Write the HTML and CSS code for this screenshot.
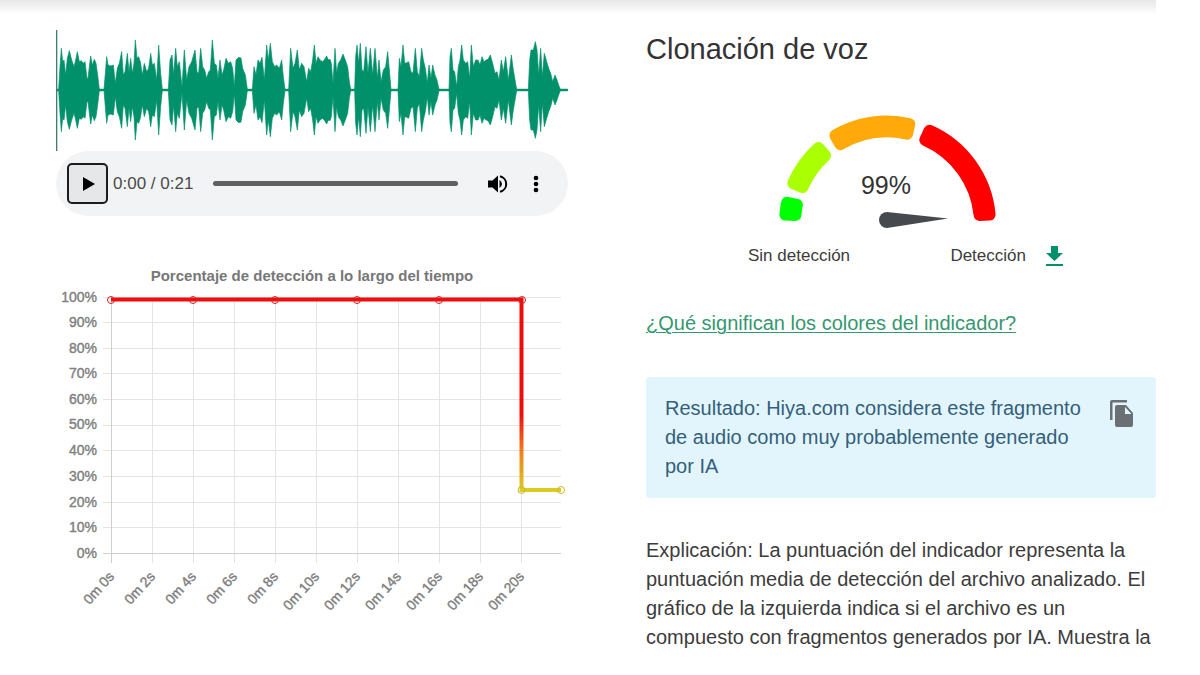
FILE: index.html
```html
<!doctype html>
<html lang="es">
<head>
	<meta charset="utf-8">
	<meta name="viewport" content="width=device-width, initial-scale=1.0">
	<title>Clonación de voz</title>
	<link rel="stylesheet" href="styles.css">
</head>
<body>
	<div class="shade"></div>
	<main class="content">
		<section class="audio">
			<svg class="wave" viewBox="48 90 1536 363" role="img" aria-label="Forma de onda">
				<defs>
					<g id="half">
						<polygon points="50,272 50,268 56,268 60,200 64,145 68,185 72,180 77,225 82,175 88,152 95,180 102,200 106,185 112,155 118,185 124,182 130,190 135,185 141,235 144,235 148,200 152,168 157,195 163,178 168,190 173,225 178,268 192,268 196,220 200,170 204,195 212,198 220,195 226,250 232,205 238,190 245,155 250,225 255,215 262,160 267,215 272,175 277,220 282,190 286,120 291,175 296,170 301,185 307,225 313,190 320,215 326,205 332,160 337,195 343,190 350,240 356,135 362,220 367,268 385,268 390,180 396,165 401,225 407,145 412,200 418,185 426,260 433,150 440,240 447,200 455,185 465,150 471,215 476,220 482,145 488,200 494,210 500,235 506,215 511,210 517,120 523,190 529,195 534,235 540,180 546,225 551,210 558,175 565,190 572,185 578,205 583,260 588,180 596,172 603,174 608,205 616,225 622,268 637,268 642,200 648,225 654,180 660,190 666,172 673,240 680,135 685,180 691,130 697,185 704,200 710,195 718,205 725,180 730,230 735,268 746,268 752,145 759,205 765,190 772,150 778,210 785,190 792,200 800,245 806,205 812,215 818,180 823,135 828,190 834,170 840,180 848,185 854,178 860,168 865,180 870,178 874,190 879,250 885,145 890,220 895,190 902,180 909,162 916,180 923,200 928,245 932,268 932,272"/>
						<polygon points="932,272 932,268 944,268 947,170 951,135 956,190 961,130 966,210 971,215 978,140 984,220 991,145 998,225 1005,145 1012,235 1017,180 1023,245 1030,210 1037,200 1043,155 1048,210 1053,268 1074,268 1078,175 1083,200 1089,135 1094,190 1100,188 1106,185 1113,215 1119,220 1126,145 1132,215 1138,230 1145,145 1150,180 1156,205 1162,250 1167,195 1173,235 1178,195 1185,225 1191,240 1197,268 1227,268 1230,170 1234,145 1239,210 1244,215 1250,260 1255,200 1260,180 1265,135 1270,180 1277,190 1283,185 1289,235 1294,135 1300,200 1307,180 1314,180 1320,195 1326,170 1332,185 1338,180 1344,178 1351,165 1358,190 1365,220 1371,215 1377,240 1384,180 1390,215 1397,170 1405,240 1414,165 1420,210 1426,245 1430,268 1465,268 1469,180 1473,150 1480,150 1486,125 1491,150 1496,225 1502,145 1507,230 1513,160 1520,185 1526,205 1532,220 1538,245 1545,225 1551,240 1556,255 1561,268 1583,268 1583,272"/>
					</g>
				</defs>
				<g class="wave-fill">
					<use href="#half"/>
					<use href="#half" transform="matrix(1 0 0 -1 0 540)"/>
				</g>
				<rect class="cursor" x="48" y="90" width="4" height="363"/>
			</svg>

			<div class="player">
				<button class="play" type="button" aria-label="Reproducir">
					<svg width="12" height="14" viewBox="0 0 12 14"><path d="M0 0l12 7-12 7z"/></svg>
				</button>
				<span class="time">0:00 / 0:21</span>
				<input class="seek" type="range" min="0" max="21" value="0" aria-label="Posición">
				<button class="icon-btn" type="button" aria-label="Volumen">
					<svg width="20" height="18" viewBox="0 0 20 18">
						<path d="M0 5.500h4.500L10 0.500v17L4.500 12.500H0z"/>
						<path d="M11.500 5a4.500 4.500 0 0 1 0 8z"/>
						<path d="M12 1.200a8 8 0 0 1 0 15.600" fill="none" stroke="#000" stroke-width="2"/>
					</svg>
				</button>
				<button class="icon-btn" type="button" aria-label="Más opciones">
					<svg width="6" height="18" viewBox="0 0 6 18"><circle cx="3" cy="3" r="2.300"/><circle cx="3" cy="9" r="2.300"/><circle cx="3" cy="15" r="2.300"/></svg>
				</button>
			</div>

			<svg class="chart" viewBox="56 262 512 360" role="img" aria-label="Porcentaje de detección a lo largo del tiempo">
				<defs>
					<linearGradient id="drop" gradientUnits="userSpaceOnUse" x1="0" y1="300" x2="0" y2="490">
						<stop offset="0.600" stop-color="#f00c0c"/>
						<stop offset="0.800" stop-color="#f08020"/>
						<stop offset="1" stop-color="#dccb20"/>
					</linearGradient>
				</defs>
				<text class="chart-title" x="312" y="281">Porcentaje de detección a lo largo del tiempo</text>
				<path class="grid" d="M103 297.500H561M103 322.500H561M103 348.500H561M103 373.500H561M103 399.500H561M103 425.500H561M103 450.500H561M103 476.500H561M103 502.500H561M103 527.500H561"/>
				<path class="grid" d="M152.500 297V563M193.500 297V563M234.500 297V563M275.500 297V563M316.500 297V563M357.500 297V563M398.500 297V563M439.500 297V563M480.500 297V563M521.500 297V563"/>
				<path class="axis" d="M103 553.500H561M111.500 297V563"/>
				<g class="y-labels">
					<text x="97" y="302">100%</text>
					<text x="97" y="327">90%</text>
					<text x="97" y="353">80%</text>
					<text x="97" y="378">70%</text>
					<text x="97" y="404">60%</text>
					<text x="97" y="429">50%</text>
					<text x="97" y="455">40%</text>
					<text x="97" y="481">30%</text>
					<text x="97" y="507">20%</text>
					<text x="97" y="532">10%</text>
					<text x="97" y="558">0%</text>
				</g>
				<g class="x-labels">
					<text transform="translate(115 577) rotate(-48)">0m 0s</text>
					<text transform="translate(156 577) rotate(-48)">0m 2s</text>
					<text transform="translate(197 577) rotate(-48)">0m 4s</text>
					<text transform="translate(238 577) rotate(-48)">0m 6s</text>
					<text transform="translate(279 577) rotate(-48)">0m 8s</text>
					<text transform="translate(320 577) rotate(-48)">0m 10s</text>
					<text transform="translate(361 577) rotate(-48)">0m 12s</text>
					<text transform="translate(402 577) rotate(-48)">0m 14s</text>
					<text transform="translate(443 577) rotate(-48)">0m 16s</text>
					<text transform="translate(484 577) rotate(-48)">0m 18s</text>
					<text transform="translate(525 577) rotate(-48)">0m 20s</text>
				</g>
				<path class="line" d="M111 299.500H521.500V490H561" stroke="url(#drop)"/>
				<g class="dots">
					<circle cx="111" cy="300" r="3.500"/>
					<circle cx="193" cy="300" r="3.500"/>
					<circle cx="275" cy="300" r="3.500"/>
					<circle cx="357" cy="300" r="3.500"/>
					<circle cx="439" cy="300" r="3.500"/>
					<circle cx="522" cy="300" r="3.500"/>
				</g>
				<g class="dots low">
					<circle cx="521.500" cy="490" r="3.500"/>
					<circle cx="561" cy="490" r="3.500"/>
				</g>
			</svg>
		</section>

		<section class="result">
			<h1>Clonación de voz</h1>

			<div class="gauge">
				<svg viewBox="748 106 316 130" role="img" aria-label="99% de detección">
					<g class="arcs">
						<path class="green" d="M785.400 213.600A102 102 0 0 1 787.100 201.800L796.900 203.800A92 92 0 0 0 795.400 214z"/>
						<path class="lime" d="M793.300 182.200A102 102 0 0 1 818.400 147.100L825.100 154.500A92 92 0 0 0 802.500 186.100z"/>
						<path class="orange" d="M835.400 134.500A102 102 0 0 1 909.300 123L907.100 132.700A92 92 0 0 0 840.400 143.200z"/>
						<path class="red" d="M929.500 129.800A102 102 0 0 1 989.600 213.600L979.600 214A92 92 0 0 0 925.300 138.900z"/>
					</g>
					<path class="needle" d="M887 211L948 217.500L887 227A8 8 0 0 1 887 211z"/>
					<text class="score" x="886" y="193">99%</text>
				</svg>
				<div class="legend">
					<span>Sin detección</span>
					<span class="right">Detección</span>
					<button class="download" type="button" aria-label="Descargar">
						<svg width="18" height="22" viewBox="0 0 18 22"><path d="M5 1h7v7h5l-8.500 8L0 8h5zM0 19h17v2H0z"/></svg>
					</button>
				</div>
			</div>

			<a class="help" href="#colores">¿Qué significan los colores del indicador?</a>

			<div class="notice">
				<p>Resultado: Hiya.com considera este fragmento de audio como muy probablemente generado por IA</p>
				<button class="copy" type="button" aria-label="Copiar">
					<svg width="24" height="28" viewBox="0 0 24 28">
						<path d="M17 0H2Q0 0 0 2v18h2.500V2.500H17z"/>
						<path fill-rule="evenodd" d="M7 5h9l7 8v12q0 2-2 2H7q-2 0-2-2V7q0-2 2-2zM15 7v7h6.500z"/>
					</svg>
				</button>
			</div>

			<p class="explain">Explicación: La puntuación del indicador representa la puntuación media de detección del archivo analizado. El gráfico de la izquierda indica si el archivo es un compuesto con fragmentos generados por IA. Muestra la</p>
		</section>
	</main>
</body>
</html>
```
FILE: styles.css
```css
:root {
	--green: #00916b;
	--text: #3c3c3c;
}
body {
	margin: 0;
	background: #fff;
	color: var(--text);
	font-family: "Liberation Sans", Arial, sans-serif;
	font-size: 20px;
	line-height: 29px;
}
h1, p {
	margin: 0;
}
svg {
	display: block;
}
button {
	margin: 0;
	padding: 0;
	border: 0;
	background: none;
	cursor: pointer;
}
.shade {
	height: 14px;
	margin-right: 44px;
	background: linear-gradient(#e8e8e8, #efefef 35%, #fff);
}
.content {
	display: grid;
	grid-template-columns: 512fr 510fr;
	column-gap: 78px;
	padding: 16px 44px 0 56px;
}

/* waveform and player */
.wave {
	width: 100%;
}
.wave-fill {
	fill: var(--green);
	stroke: var(--green);
	stroke-width: 2;
}
.cursor {
	fill: #3f7f6c;
}
.player {
	display: flex;
	align-items: center;
	height: 65px;
	padding: 0 24px 0 11px;
	box-sizing: border-box;
	border-radius: 33px;
	background: #f1f3f4;
}
.play {
	display: flex;
	align-items: center;
	justify-content: center;
	flex: none;
	width: 41px;
	height: 41px;
	border: 2px solid #1c1c1c;
	border-radius: 5px;
	background: #e6e7e8;
}
.play svg {
	margin-left: 3px;
}
.time {
	margin: 0 20px 0 5px;
	font-size: 17px;
	white-space: nowrap;
	color: #4a4a4a;
}
.seek {
	flex: 1;
	min-width: 0;
	height: 5px;
	margin: 0 30px 0 0;
	appearance: none;
	border-radius: 3px;
	background: #5f6062;
}
.seek::-webkit-slider-thumb {
	appearance: none;
	width: 0;
	height: 0;
}
.icon-btn {
	display: flex;
	justify-content: center;
	width: 20px;
	margin-right: 20px;
}
.icon-btn:last-child {
	width: 16px;
	margin-right: 0;
}

/* chart */
.chart {
	width: 100%;
	margin-top: 46px;
}
.chart text {
	font-size: 14px;
	fill: #808080;
}
.chart .chart-title {
	font-size: 15px;
	font-weight: bold;
	text-anchor: middle;
	fill: #777;
}
.y-labels, .x-labels {
	text-anchor: end;
	stroke: #808080;
	stroke-width: 0.4;
}
.grid {
	stroke: #e4e4e4;
}
.axis {
	stroke: #cfcfcf;
}
.line {
	fill: none;
	stroke-width: 4;
}
.dots {
	fill: none;
	stroke: #d82020;
}
.low {
	stroke: #c5b830;
}

/* result */
h1 {
	font-size: 29px;
	line-height: 38px;
	font-weight: 400;
	color: #333;
}
.gauge {
	width: 316px;
	margin: 39px 0 38px 20%;
}
.arcs {
	stroke-width: 12;
	stroke-linejoin: round;
}
.green {
	fill: #0f0;
	stroke: #0f0;
}
.lime {
	fill: #af0;
	stroke: #af0;
}
.orange {
	fill: #ffa90a;
	stroke: #ffa90a;
}
.red {
	fill: red;
	stroke: red;
}
.needle {
	fill: #464a4f;
}
.score {
	font-size: 25px;
	text-anchor: middle;
	fill: #333;
}
.legend {
	display: flex;
	align-items: center;
	margin-top: 4px;
	font-size: 17px;
	line-height: 30px;
}
.legend .right {
	margin-left: auto;
}
.download {
	margin-left: 20px;
	fill: var(--green);
}
.help {
	display: block;
	color: #35976f;
	text-decoration: underline;
	text-decoration-thickness: 1px;
	text-underline-offset: 2px;
}
.notice {
	display: flex;
	align-items: flex-start;
	gap: 16px;
	margin: 39px 0 38px;
	padding: 17px 16px 17px 19px;
	border-radius: 3px;
	background: #e2f5fc;
	color: #345f7b;
}
.notice p {
	flex: 1;
}
.copy {
	display: flex;
	justify-content: center;
	width: 36px;
	padding-top: 6px;
	fill: #6b7075;
}
```
